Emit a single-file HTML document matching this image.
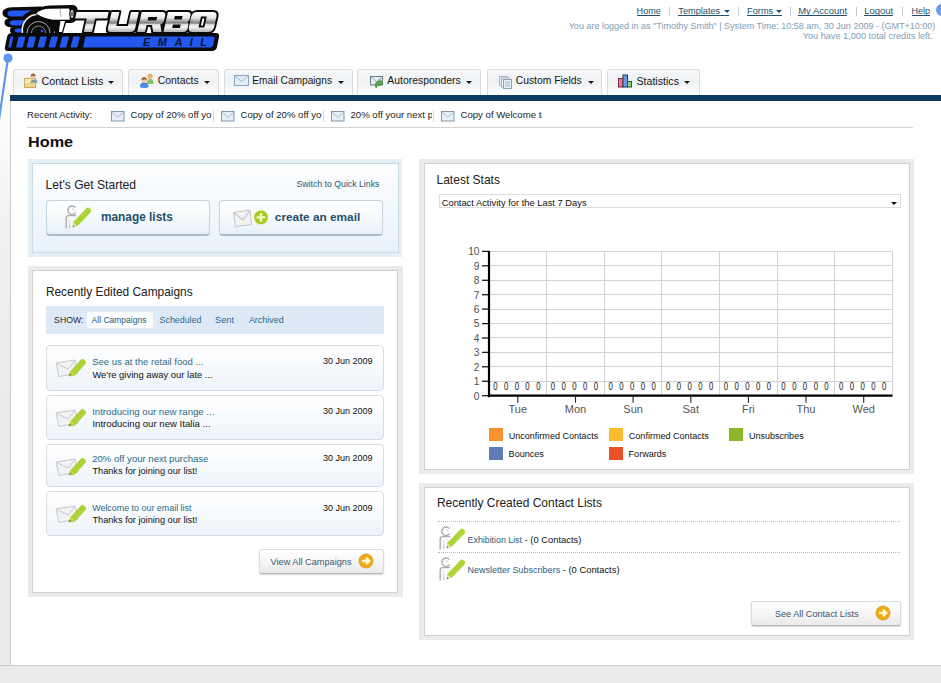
<!DOCTYPE html>
<html><head><meta charset="utf-8">
<style>
*{margin:0;padding:0;box-sizing:border-box}
html,body{width:941px;height:683px;overflow:hidden;background:#fff}
body{position:relative;font-family:"Liberation Sans",sans-serif;color:#222}
.a{position:absolute}
.t{position:absolute;white-space:nowrap;line-height:1}
.tab{position:absolute;top:69px;height:26px;border:1px solid #dddddd;border-bottom:none;border-radius:3px 3px 0 0;background:linear-gradient(#f6f7f8,#eff2f4 45%,#fcfdfd)}
.arr{position:absolute;width:0;height:0;border-left:3.5px solid transparent;border-right:3.5px solid transparent;border-top:3.5px solid #1a1a1a}
.panel{position:absolute;background:#ebebeb}
.pin{position:absolute;left:4px;top:4px;right:4px;bottom:4px;border:1px solid #d0d0d0;background:#fff}
.card{position:absolute;left:46px;width:338px;border:1px solid #d3dde6;border-radius:4px;background:linear-gradient(#ffffff,#eef4fa)}
.btn{position:absolute;border:1px solid #dcdcdc;border-bottom-color:#b8b8b8;border-radius:3px;background:linear-gradient(#ffffff,#f6f6f6 50%,#e9e9e9);box-shadow:0 1px 1.5px rgba(0,0,0,0.18)}
.bigbtn{position:absolute;top:200px;height:36px;border:1px solid #c5d3de;border-bottom:2px solid #a9bccb;border-radius:4px;background:linear-gradient(#ffffff 0%,#f7fafc 50%,#e6f0f8 100%)}
.dot{position:absolute;height:0;border-top:1px dotted #b9b9b9}
</style></head><body>
<div class="a" style="left:0;top:0;width:11px;height:683px;background:linear-gradient(#fff 0px,#fff 100px,#f8f8f8 160px,#f0f0f0 230px,#ebebeb 400px,#ebebeb 683px)"></div>
<div class="a" style="left:10px;top:95px;width:931px;height:571px;background:#fff;border-left:1px solid #cdcdcd"></div>
<div class="a" style="left:0;top:665px;width:941px;height:18px;background:#ebebeb;border-top:1px solid #cbcbcb"></div>
<svg class="a" style="left:0;top:0" width="232" height="56" viewBox="0 0 232 56">
<defs>
<linearGradient id="chrome" gradientUnits="userSpaceOnUse" x1="0" y1="12" x2="0" y2="32">
<stop offset="0" stop-color="#ffffff"/><stop offset="0.3" stop-color="#e6e6e6"/><stop offset="0.55" stop-color="#7c7c7c"/><stop offset="0.62" stop-color="#d8d8d8"/><stop offset="0.75" stop-color="#f6f6f6"/><stop offset="1" stop-color="#b0b0b0"/>
</linearGradient>
</defs>
<!-- flames -->
<path d="M2.5 13 C2.5 8.5 8 7.3 14 7.3 L42 6.5 L44 19 L14 18.8 C8 18.8 2.5 17.2 2.5 13 Z" fill="#0a0a0a"/>
<path d="M4.5 22.6 C4.5 18.6 9 17.6 14 17.6 L40 17 L40 27.8 L14 27.8 C9 27.8 4.5 26.6 4.5 22.6 Z" fill="#0a0a0a"/>
<path d="M10 30.6 C10 27.4 13 26.6 17 26.6 L34 26.5 L34 34.5 L17 34.5 C13 34.5 10 33.6 10 30.6 Z" fill="#0a0a0a"/>
<path d="M7.5 13.4 C7.5 11.4 10 10.6 13 10.6 L32 10.6 C27.5 12.3 24.5 14.4 22.5 16.6 L13 16.6 C10 16.6 7.5 15.4 7.5 13.4 Z" fill="#2358f0"/>
<path d="M9.6 23 C9.6 21.2 11.5 20.3 14 20.3 L27 20.3 C23.5 21.7 21.8 23.4 20.7 25.4 L14 25.4 C11.5 25.4 9.6 24.8 9.6 23 Z" fill="#2358f0"/>
<path d="M14.6 30.6 C14.6 29.3 16 28.6 18 28.6 L24 28.6 C23 29.8 22.4 31 22 32.5 L18 32.5 C16 32.5 14.6 31.9 14.6 30.6 Z" fill="#2358f0"/>
<!-- turbo wheel -->
<circle cx="38.5" cy="30" r="16" fill="#0a0a0a"/>
<path d="M22.5 33 A16 16 0 0 1 38 14.2" fill="none" stroke="#f2f2f2" stroke-width="1.5"/>
<path d="M27 33 A11.5 11.5 0 0 1 50 33" fill="none" stroke="#a8a8a8" stroke-width="1"/>
<path d="M31.5 33 A7 7 0 0 1 45.5 33" fill="none" stroke="#8c8c8c" stroke-width="1"/>
<circle cx="42" cy="31" r="1.3" fill="#2358f0"/>
<!-- pipe -->
<path d="M33 12 Q40 5.5 50 5.5 L73 5 Q78.5 5.5 78 13.5 Q77.5 22.5 71 23 L66 23 L63 33 L55 33 Q52 22 42 19 Z" fill="#0a0a0a"/>
<path d="M36 13.5 Q41 9 50 8.8 L69 8.6 Q71 13 69.5 19.5 L52 19.5 Q44 18.5 36 13.5 Z" fill="#ffffff"/>
<path d="M52 19.5 L69.5 19.5" stroke="#bbb" stroke-width="0.8"/>
<path d="M60.5 21 L65 21 L62 32 L59 32 Q59.5 26 60.5 21 Z" fill="#ffffff"/>
<path d="M60 9 L61 17" stroke="#9a9a9a" stroke-width="0.8"/>
<ellipse cx="72" cy="14" rx="2.8" ry="5.8" fill="#0a0a0a"/>
<ellipse cx="72" cy="14" rx="1.5" ry="4" fill="#e8e8e8"/>
<ellipse cx="72" cy="14" rx="0.6" ry="2.6" fill="#0a0a0a"/>
<!-- bar backdrop -->
<path d="M12 33 L216 33 Q219.5 33 219 37 L217 47 Q216 51 212 51 L8 51 Q4 51 5 47 L7 37 Q8 33 12 33 Z" fill="#0a0a0a"/>
<g fill="#2358f0">
<path d="M10.5 36.5 L13.5 36.5 L11.2 47.5 L8.2 47.5 Z"/>
<path d="M19.5 36.5 L25.0 36.5 Q25.5 36.5 25.3 37.5 L23.0 46.5 Q22.7 47.5 22.0 47.5 L16.5 47.5 Q16.0 47.5 16.2 46.5 L18.5 37.5 Q18.8 36.5 19.5 36.5 Z"/>
<path d="M30 36.5 L35.5 36.5 Q36 36.5 35.8 37.5 L33.5 46.5 Q33.2 47.5 32.5 47.5 L27 47.5 Q26.5 47.5 26.7 46.5 L29 37.5 Q29.3 36.5 30 36.5 Z"/>
<path d="M41 36.5 L46.5 36.5 Q47 36.5 46.8 37.5 L44.5 46.5 Q44.2 47.5 43.5 47.5 L38 47.5 Q37.5 47.5 37.7 46.5 L40 37.5 Q40.3 36.5 41 36.5 Z"/>
<path d="M52 36.5 L57.5 36.5 Q58 36.5 57.8 37.5 L55.5 46.5 Q55.2 47.5 54.5 47.5 L49 47.5 Q48.5 47.5 48.7 46.5 L51 37.5 Q51.3 36.5 52 36.5 Z"/>
<path d="M63 36.5 L68.5 36.5 Q69 36.5 68.8 37.5 L66.5 46.5 Q66.2 47.5 65.5 47.5 L60 47.5 Q59.5 47.5 59.7 46.5 L62 37.5 Q62.3 36.5 63 36.5 Z"/>
<path d="M74 36.5 L79.5 36.5 Q80 36.5 79.8 37.5 L77.5 46.5 Q77.2 47.5 76.5 47.5 L71 47.5 Q70.5 47.5 70.7 46.5 L73 37.5 Q73.3 36.5 74 36.5 Z"/>
<path d="M85.5 36.5 L212.5 36.5 Q215 36.5 214.5 38.5 L213 45.5 Q212.5 47.5 210 47.5 L83 47.5 Z"/>
</g>
<!-- TURBO letters -->
<g transform="translate(76,0) scale(0.972,1) translate(-76,0) translate(0,32) skewX(-13) translate(0,-32)">
<path fill="url(#chrome)" stroke="#0a0a0a" stroke-width="4" stroke-linejoin="round" paint-order="stroke" fill-rule="evenodd" d="
M72 12 L105 12 L105 18.5 L92.5 18.5 L92.5 32 L84 32 L84 18.5 L72 18.5 Z
M108 12 L116 12 L116 26 L128 26 L128 12 L136 12 L136 28 Q136 32 132 32 L112 32 Q108 32 108 28 Z
M139 12 L160 12 Q164 12 164 16 L164 21 Q164 24 161 24.5 L164 32 L155.5 32 L152.5 25 L147 25 L147 32 L139 32 Z M147 17 L147 20.5 L156 20.5 L156 17 Z
M166 12 L186 12 Q190 12 190 15.5 L190 19 Q190 21.5 188 22 Q190 22.5 190 25 L190 28.5 Q190 32 186 32 L166 32 Z M174 16 L174 19.5 L182 19.5 L182 16 Z M174 24.5 L174 28 L182 28 L182 24.5 Z
M196 12 L212 12 Q217 12 217 17 L217 27 Q217 32 212 32 L196 32 Q191 32 191 27 L191 17 Q191 12 196 12 Z M201 16.5 L201 27.5 L207 27.5 L207 16.5 Z
"/>
</g>
<!-- EMAIL -->
<text x="143" y="46.3" font-family="Liberation Sans" font-weight="bold" font-style="italic" font-size="11" textLength="64" lengthAdjust="spacing" fill="#0a1430">EMAIL</text>
</svg>
<svg class="a" style="left:0;top:48px" width="20" height="80"><line x1="8" y1="10" x2="-1.5" y2="75" stroke="#5f98ea" stroke-width="2.2"/><circle cx="8" cy="10" r="4.6" fill="#5f98ea"/></svg>
<span class="t" style="left:636.5999999999999px;top:7.31px;font-size:9.09px;color:#22506c;">Home</span>
<div class="a" style="left:636.5999999999999px;top:15px;width:23.5px;height:1px;background:#22506c"></div>
<div class="a" style="left:669px;top:7px;width:1px;height:9px;background:#c3ccd4"></div>
<span class="t" style="left:678.3px;top:7.21px;font-size:9.2px;color:#22506c;">Templates</span>
<div class="a" style="left:678.3px;top:15px;width:51px;height:1px;background:#22506c"></div>
<div class="arr" style="left:724px;top:10.2px;border-top-color:#22506c;border-left-width:3px;border-right-width:3px;border-top-width:3.6px"></div>
<div class="a" style="left:738px;top:7px;width:1px;height:9px;background:#c3ccd4"></div>
<span class="t" style="left:747.0999999999999px;top:7.21px;font-size:9.2px;color:#22506c;">Forms</span>
<div class="a" style="left:747.0999999999999px;top:15px;width:35px;height:1px;background:#22506c"></div>
<div class="arr" style="left:776px;top:10.2px;border-top-color:#22506c;border-left-width:3px;border-right-width:3px;border-top-width:3.6px"></div>
<div class="a" style="left:790px;top:7px;width:1px;height:9px;background:#c3ccd4"></div>
<span class="t" style="left:798.24px;top:6.40px;font-size:9.45px;color:#22506c;">My Account</span>
<div class="a" style="left:798.24px;top:15px;width:48.5px;height:1px;background:#22506c"></div>
<div class="a" style="left:856px;top:7px;width:1px;height:9px;background:#c3ccd4"></div>
<span class="t" style="left:864.25px;top:6.42px;font-size:9.43px;color:#22506c;">Logout</span>
<div class="a" style="left:864.25px;top:15px;width:28.5px;height:1px;background:#22506c"></div>
<div class="a" style="left:902px;top:7px;width:1px;height:9px;background:#c3ccd4"></div>
<span class="t" style="left:911.5799999999999px;top:7.36px;font-size:9.02px;color:#22506c;">Help</span>
<div class="a" style="left:911.5799999999999px;top:15px;width:18px;height:1px;background:#22506c"></div>
<div class="a" style="left:935.5px;top:4px;width:12px;height:12px;border-radius:6px;background:#6a9fea"></div>
<span class="t" style="left:568.7px;top:22.36px;font-size:9.02px;color:#7f9db6;">You are logged in as "Timothy Smith" | System Time: 10:58 am, 30 Jun 2009 - (GMT+10:00)</span>
<span class="t" style="left:802.7px;top:32.24px;font-size:9.17px;color:#7f9db6;">You have 1,000 total credits left.</span>
<div class="tab" style="left:13px;width:110px"></div>
<div class="tab" style="left:128px;width:91px"></div>
<div class="tab" style="left:224px;width:129px"></div>
<div class="tab" style="left:357px;width:124px"></div>
<div class="tab" style="left:487px;width:115px"></div>
<div class="tab" style="left:607px;width:93px"></div>
<span class="t" style="left:41.5px;top:75.95px;font-size:10.69px;color:#161616;">Contact Lists</span>
<div class="arr" style="left:108.4px;top:81px"></div>
<span class="t" style="left:157.8px;top:76.23px;font-size:10.36px;color:#161616;">Contacts</span>
<div class="arr" style="left:204px;top:81px"></div>
<span class="t" style="left:252.3px;top:76.38px;font-size:10.18px;color:#161616;">Email Campaigns</span>
<div class="arr" style="left:337.5px;top:81px"></div>
<span class="t" style="left:387.3px;top:76.19px;font-size:10.41px;color:#161616;">Autoresponders</span>
<div class="arr" style="left:466px;top:81px"></div>
<span class="t" style="left:515.7px;top:76.24px;font-size:10.35px;color:#161616;">Custom Fields</span>
<div class="arr" style="left:587.5px;top:81px"></div>
<span class="t" style="left:636.5px;top:76.02px;font-size:10.61px;color:#161616;">Statistics</span>
<div class="arr" style="left:684px;top:81px"></div>
<svg class="a" style="left:22px;top:72px" width="18" height="18" viewBox="0 0 18 18">
<rect x="2.5" y="6.5" width="11" height="9" fill="#f8eaa8" stroke="#c8aa68" stroke-width="1"/>
<rect x="3" y="11" width="10" height="4" fill="#eed486"/>
<path d="M8 11 L10 7.5 L14 7.5 L16 10.5 Z" fill="#8a9aa0"/>
<circle cx="11" cy="5" r="2.6" fill="#e8c8a8"/>
<path d="M8.5 4.5 Q9 1.5 11 1.6 Q13.5 1.6 13.6 4.5 Q12 3 8.5 4.5 Z" fill="#9a5a2a"/>
</svg>
<svg class="a" style="left:138px;top:72px" width="18" height="18" viewBox="0 0 18 18">
<path d="M9 11 Q9 7 12 7 Q15.5 7 15.5 11 L15.5 12 L9 12 Z" fill="#8bbf6a"/>
<circle cx="12" cy="4.2" r="2.6" fill="#e9b46a"/>
<path d="M2 15 Q2 10.5 6 10.5 Q10.5 10.5 10.5 15 Z" fill="#3f7fd0"/>
<ellipse cx="6.2" cy="14" rx="4.3" ry="2" fill="#4d8fe0"/>
<circle cx="6.2" cy="8.2" r="2.6" fill="#f0c8a0"/>
<path d="M3.6 8 Q3.6 5.2 6.2 5.3 Q8.8 5.2 8.8 8 Q7 6.5 3.6 8 Z" fill="#8a4f2a"/>
</svg>
<svg class="a" style="left:234px;top:75px" width="16" height="12" viewBox="0 0 16 12">
<rect x="0.5" y="0.5" width="14" height="10" fill="#e4eef8" stroke="#8aa4c0" stroke-width="1"/>
<path d="M1 1 L7.5 6.5 L14 1" fill="none" stroke="#9cb4cc" stroke-width="1"/>
</svg>
<svg class="a" style="left:369px;top:75px" width="16" height="15" viewBox="0 0 16 15">
<rect x="1.5" y="1.5" width="12" height="8.5" fill="#e6eef6" stroke="#6c7c8c" stroke-width="1"/>
<path d="M2 2 L7.5 6.5 L13 2" fill="none" stroke="#9ab" stroke-width="1"/>
<path d="M6 9 Q8 5.5 11 6 L11 4.5 L14 8 L11 11 L11 9.5 Q9 9 7 13 Z" fill="#5aa848" stroke="#3a7a30" stroke-width="0.6"/>
</svg>
<svg class="a" style="left:498px;top:75px" width="16" height="15" viewBox="0 0 16 15">
<rect x="1.5" y="1.5" width="8" height="9" fill="#eef3f9" stroke="#a8b8c8" stroke-width="1"/>
<rect x="3.5" y="3" width="8" height="9" fill="#eef3f9" stroke="#a0b2c4" stroke-width="1"/>
<rect x="5.5" y="4.5" width="8" height="9" fill="#e8eef8" stroke="#8ea4bc" stroke-width="1"/>
<path d="M7 7 L12 7 M7 9 L12 9 M7 11 L12 11" stroke="#98acc0" stroke-width="0.8"/>
</svg>
<svg class="a" style="left:617px;top:74px" width="16" height="14" viewBox="0 0 16 14">
<rect x="1.5" y="4.5" width="4.5" height="8.5" fill="#f07a8a" stroke="#7a2a3a" stroke-width="1"/>
<rect x="6" y="1" width="4.5" height="12" fill="#6c9ae6" stroke="#1f3a6a" stroke-width="1"/>
<rect x="10.5" y="7.5" width="4" height="5.5" fill="#8acc8a" stroke="#2a5a2a" stroke-width="1"/>
</svg>
<div class="a" style="left:10px;top:95px;width:931px;height:6px;background:#0c3a62"></div>
<span class="t" style="left:27.0px;top:110.22px;font-size:9.55px;color:#222;">Recent Activity:</span>
<svg class="a" style="left:111px;top:110.5px" width="14" height="11" viewBox="0 0 14 11"><rect x="0.5" y="0.5" width="12.5" height="9.5" fill="#e6eff8" stroke="#7f98b0" stroke-width="1"/><path d="M1 1.5 L6.75 6 L12.5 1.5" fill="none" stroke="#9fb8d0" stroke-width="0.9"/></svg>
<div class="a" style="left:130.5px;top:108px;width:81px;height:14px;overflow:hidden"><span class="t" style="left:0px;top:2.17px;font-size:9.6px;color:#222;">Copy of 20% off your next purchase</span>
</div>
<div class="a" style="left:213px;top:110px;width:1px;height:12px;background:#d9d9d9"></div>
<svg class="a" style="left:221px;top:110.5px" width="14" height="11" viewBox="0 0 14 11"><rect x="0.5" y="0.5" width="12.5" height="9.5" fill="#e6eff8" stroke="#7f98b0" stroke-width="1"/><path d="M1 1.5 L6.75 6 L12.5 1.5" fill="none" stroke="#9fb8d0" stroke-width="0.9"/></svg>
<div class="a" style="left:240.5px;top:108px;width:81px;height:14px;overflow:hidden"><span class="t" style="left:0px;top:2.17px;font-size:9.6px;color:#222;">Copy of 20% off your next purchase</span>
</div>
<div class="a" style="left:323px;top:110px;width:1px;height:12px;background:#d9d9d9"></div>
<svg class="a" style="left:331px;top:110.5px" width="14" height="11" viewBox="0 0 14 11"><rect x="0.5" y="0.5" width="12.5" height="9.5" fill="#e6eff8" stroke="#7f98b0" stroke-width="1"/><path d="M1 1.5 L6.75 6 L12.5 1.5" fill="none" stroke="#9fb8d0" stroke-width="0.9"/></svg>
<div class="a" style="left:350.5px;top:108px;width:81px;height:14px;overflow:hidden"><span class="t" style="left:0px;top:2.17px;font-size:9.6px;color:#222;">20% off your next purchase</span>
</div>
<div class="a" style="left:433px;top:110px;width:1px;height:12px;background:#d9d9d9"></div>
<svg class="a" style="left:441px;top:110.5px" width="14" height="11" viewBox="0 0 14 11"><rect x="0.5" y="0.5" width="12.5" height="9.5" fill="#e6eff8" stroke="#7f98b0" stroke-width="1"/><path d="M1 1.5 L6.75 6 L12.5 1.5" fill="none" stroke="#9fb8d0" stroke-width="0.9"/></svg>
<div class="a" style="left:460.5px;top:108px;width:81px;height:14px;overflow:hidden"><span class="t" style="left:0px;top:2.17px;font-size:9.6px;color:#222;">Copy of Welcome to our email list</span>
</div>
<div class="a" style="left:27px;top:127px;width:886px;height:1px;background:#d2d2d2"></div>
<span class="t" style="left:28.0px;top:135.15px;font-size:14px;color:#111;font-weight:bold;transform:scaleX(1.16);transform-origin:0 0;">Home</span>
<div class="a" style="left:28px;top:159px;width:374px;height:98px;background:#e5eef2"></div>
<div class="a" style="left:32px;top:163px;width:367px;height:90px;border:1px solid #c8dce6;background:linear-gradient(#fdfeff 0%,#f5f9fc 40%,#e8f1fa 100%)"></div>
<span class="t" style="left:45.6px;top:178.75px;font-size:12.11px;color:#202020;">Let's Get Started</span>
<span class="t" style="left:296.5px;top:180.41px;font-size:8.73px;color:#2b5674;">Switch to Quick Links</span>
<div class="bigbtn" style="left:46px;width:164px"></div>
<div class="bigbtn" style="left:219px;width:164px"></div>
<span class="t" style="left:100.9px;top:211.74px;font-size:11.88px;color:#1f4f6e;font-weight:bold;">manage lists</span>
<span class="t" style="left:274.8px;top:211.79px;font-size:11.83px;color:#1f4f6e;font-weight:bold;">create an email</span>
<svg class="a" style="left:65px;top:205px" width="27" height="24" viewBox="0 0 27 24">
<path d="M10.3 2.6 A4.2 4.2 0 1 0 10.5 7.6" fill="none" stroke="#ababab" stroke-width="1.4"/>
<path d="M7 3.6 L9.6 5.2" stroke="#bdbdbd" stroke-width="0.9"/>
<path d="M1.2 23.5 L1.2 13.2 Q1.2 10.6 3.8 10.6 L11.5 10.6" fill="none" stroke="#ababab" stroke-width="1.4"/>
<path d="M4.6 14.5 L4.6 23.5" stroke="#c4c4c4" stroke-width="1.1"/>
<path d="M2 11.5 L11 11.5 L8.5 20 L2 20 Z" fill="#f4f4f4" opacity="0.6"/>
<path d="M8 17.2 L21.2 3.4 Q23 1.8 24.8 3.4 L25.6 4.2 Q27 5.8 25.5 7.4 L12.2 21.2 Z" fill="#acd433"/>
<path d="M8 17.2 L12.2 21.2 L7.6 22.2 Z" fill="#d8e8a0"/>
<path d="M7.6 22.2 L8.4 20.3 L9.6 21.5 Z" fill="#555"/>
</svg>
<svg class="a" style="left:232px;top:206px" width="40" height="24" viewBox="0 0 40 24">
<path d="M1.5 6.5 L18 4 L19.5 18.5 L3.5 20.5 Z" fill="#f2f2f2" stroke="#c6c6c6" stroke-width="1"/>
<path d="M2 7 L11 14 L18 4.5" fill="none" stroke="#c4c4c4" stroke-width="1.2"/>
<circle cx="29" cy="11.4" r="7.6" fill="#e4f2a0" opacity="0.6"/>
<circle cx="29" cy="11.4" r="6.8" fill="#a6ca22"/>
<path d="M29 7 L29 15.8 M24.6 11.4 L33.4 11.4" stroke="#f2f9c8" stroke-width="2.4"/>
</svg>
<div class="panel" style="left:28px;top:266px;width:375px;height:331px"><div class="pin" style="right:5px"></div></div>
<span class="t" style="left:45.9px;top:286.93px;font-size:11.9px;color:#202020;">Recently Edited Campaigns</span>
<div class="a" style="left:46px;top:306px;width:338px;height:28px;background:#dde9f6"></div>
<div class="a" style="left:87px;top:311.5px;width:66px;height:16.5px;background:#fbfcfe;border-radius:2px"></div>
<span class="t" style="left:54.1px;top:316.24px;font-size:8.7px;color:#2a2a2a;">SHOW:</span>
<span class="t" style="left:91.6px;top:316.40px;font-size:8.5px;color:#2c5a7a;">All Campaigns</span>
<span class="t" style="left:159.6px;top:316.11px;font-size:8.85px;color:#2c6a8a;">Scheduled</span>
<span class="t" style="left:215px;top:315.77px;font-size:9.25px;color:#2c6a8a;">Sent</span>
<span class="t" style="left:248.9px;top:316.00px;font-size:8.98px;color:#2c6a8a;">Archived</span>
<div class="card" style="top:345px;height:46px"></div>
<svg class="a" style="left:55px;top:357px" width="32" height="22" viewBox="0 0 32 22">
<path d="M1 6 L20 3 L23 16 L4 19.5 Z" fill="#f3f3f3" stroke="#c8c8c8" stroke-width="1"/>
<path d="M1.5 6.5 L13 12 L20 3.5" fill="none" stroke="#c8c8c8" stroke-width="1"/>
<path d="M14 19 L15.5 14.5 L26 3 Q27.5 1.5 29 3 L30 4 Q31.5 5.5 30 7 L19.5 18.5 Z" fill="#acd433" stroke="#9cc52a" stroke-width="0.6"/>
<path d="M15.5 14.5 L19.5 18.5" stroke="#c8e678" stroke-width="1"/>
<path d="M14 19 L15 17 L16 18 Z" fill="#555"/>
</svg>
<span class="t" style="left:92.2px;top:356.92px;font-size:9.54px;color:#2c6c86;">See us at the retail food ...</span>
<span class="t" style="left:92.4px;top:370.03px;font-size:9.42px;color:#111;">We're giving away our late ...</span>
<span class="t" style="left:323px;top:357.36px;font-size:9.02px;color:#111;">30 Jun 2009</span>
<div class="card" style="top:395px;height:45px"></div>
<svg class="a" style="left:55px;top:407px" width="32" height="22" viewBox="0 0 32 22">
<path d="M1 6 L20 3 L23 16 L4 19.5 Z" fill="#f3f3f3" stroke="#c8c8c8" stroke-width="1"/>
<path d="M1.5 6.5 L13 12 L20 3.5" fill="none" stroke="#c8c8c8" stroke-width="1"/>
<path d="M14 19 L15.5 14.5 L26 3 Q27.5 1.5 29 3 L30 4 Q31.5 5.5 30 7 L19.5 18.5 Z" fill="#acd433" stroke="#9cc52a" stroke-width="0.6"/>
<path d="M15.5 14.5 L19.5 18.5" stroke="#c8e678" stroke-width="1"/>
<path d="M14 19 L15 17 L16 18 Z" fill="#555"/>
</svg>
<span class="t" style="left:92.2px;top:406.87px;font-size:9.6px;color:#2c6c86;">Introducing our new range ...</span>
<span class="t" style="left:92.4px;top:418.84px;font-size:9.64px;color:#111;">Introducing our new Italia ...</span>
<span class="t" style="left:323px;top:407.36px;font-size:9.02px;color:#111;">30 Jun 2009</span>
<div class="card" style="top:444px;height:43px"></div>
<svg class="a" style="left:55px;top:456px" width="32" height="22" viewBox="0 0 32 22">
<path d="M1 6 L20 3 L23 16 L4 19.5 Z" fill="#f3f3f3" stroke="#c8c8c8" stroke-width="1"/>
<path d="M1.5 6.5 L13 12 L20 3.5" fill="none" stroke="#c8c8c8" stroke-width="1"/>
<path d="M14 19 L15.5 14.5 L26 3 Q27.5 1.5 29 3 L30 4 Q31.5 5.5 30 7 L19.5 18.5 Z" fill="#acd433" stroke="#9cc52a" stroke-width="0.6"/>
<path d="M15.5 14.5 L19.5 18.5" stroke="#c8e678" stroke-width="1"/>
<path d="M14 19 L15 17 L16 18 Z" fill="#555"/>
</svg>
<span class="t" style="left:92.2px;top:453.90px;font-size:9.57px;color:#2c6c86;">20% off your next purchase</span>
<span class="t" style="left:92.4px;top:467.20px;font-size:9.21px;color:#111;">Thanks for joining our list!</span>
<span class="t" style="left:323px;top:454.36px;font-size:9.02px;color:#111;">30 Jun 2009</span>
<div class="card" style="top:491px;height:45px"></div>
<svg class="a" style="left:55px;top:503px" width="32" height="22" viewBox="0 0 32 22">
<path d="M1 6 L20 3 L23 16 L4 19.5 Z" fill="#f3f3f3" stroke="#c8c8c8" stroke-width="1"/>
<path d="M1.5 6.5 L13 12 L20 3.5" fill="none" stroke="#c8c8c8" stroke-width="1"/>
<path d="M14 19 L15.5 14.5 L26 3 Q27.5 1.5 29 3 L30 4 Q31.5 5.5 30 7 L19.5 18.5 Z" fill="#acd433" stroke="#9cc52a" stroke-width="0.6"/>
<path d="M15.5 14.5 L19.5 18.5" stroke="#c8e678" stroke-width="1"/>
<path d="M14 19 L15 17 L16 18 Z" fill="#555"/>
</svg>
<span class="t" style="left:92.2px;top:504.45px;font-size:8.92px;color:#2c6c86;">Welcome to our email list</span>
<span class="t" style="left:92.4px;top:516.20px;font-size:9.21px;color:#111;">Thanks for joining our list!</span>
<span class="t" style="left:323px;top:504.36px;font-size:9.02px;color:#111;">30 Jun 2009</span>
<div class="btn" style="left:258.5px;top:548.5px;width:125px;height:25.5px"></div>
<span class="t" style="left:270.6px;top:558.23px;font-size:9.18px;color:#3b5872;">View All Campaigns</span>
<svg class="a" style="left:358px;top:553px" width="16" height="16" viewBox="0 0 16 16"><circle cx="8" cy="8" r="7" fill="#eeaa18" stroke="#dc9410" stroke-width="0.8"/><path d="M4 8 L11 8 M8 4.8 L11.3 8 L8 11.2" fill="none" stroke="#fff8cc" stroke-width="2.4" stroke-linejoin="miter"/></svg>
<div class="panel" style="left:419px;top:159px;width:495px;height:315px"><div class="pin" style="left:5px"></div></div>
<span class="t" style="left:436.5px;top:173.83px;font-size:12.02px;color:#202020;">Latest Stats</span>
<div class="a" style="left:439px;top:194px;width:462px;height:14px;border:1px solid #dcdcdc;background:#fff"></div>
<span class="t" style="left:441.7px;top:198.58px;font-size:9.36px;color:#111;">Contact Activity for the Last 7 Days</span>
<div class="arr" style="left:890.8px;top:202px;border-left-width:3.3px;border-right-width:3.3px;border-top-width:3.8px;border-top-color:#111"></div>
<svg class="a" style="left:0;top:0" width="941" height="683" viewBox="0 0 941 683">
<line x1="489" y1="381.5" x2="892.5" y2="381.5" stroke="#d2d2d2" stroke-width="1"/>
<line x1="489" y1="366.5" x2="892.5" y2="366.5" stroke="#d2d2d2" stroke-width="1"/>
<line x1="489" y1="352.5" x2="892.5" y2="352.5" stroke="#d2d2d2" stroke-width="1"/>
<line x1="489" y1="337.5" x2="892.5" y2="337.5" stroke="#d2d2d2" stroke-width="1"/>
<line x1="489" y1="323.5" x2="892.5" y2="323.5" stroke="#d2d2d2" stroke-width="1"/>
<line x1="489" y1="309.5" x2="892.5" y2="309.5" stroke="#d2d2d2" stroke-width="1"/>
<line x1="489" y1="294.5" x2="892.5" y2="294.5" stroke="#d2d2d2" stroke-width="1"/>
<line x1="489" y1="280.5" x2="892.5" y2="280.5" stroke="#d2d2d2" stroke-width="1"/>
<line x1="489" y1="265.5" x2="892.5" y2="265.5" stroke="#d2d2d2" stroke-width="1"/>
<line x1="489" y1="251.5" x2="892.5" y2="251.5" stroke="#d2d2d2" stroke-width="1"/>
<line x1="546.5" y1="251.4" x2="546.5" y2="395.7" stroke="#d2d2d2" stroke-width="1"/>
<line x1="604.5" y1="251.4" x2="604.5" y2="395.7" stroke="#d2d2d2" stroke-width="1"/>
<line x1="661.5" y1="251.4" x2="661.5" y2="395.7" stroke="#d2d2d2" stroke-width="1"/>
<line x1="719.5" y1="251.4" x2="719.5" y2="395.7" stroke="#d2d2d2" stroke-width="1"/>
<line x1="777.5" y1="251.4" x2="777.5" y2="395.7" stroke="#d2d2d2" stroke-width="1"/>
<line x1="834.5" y1="251.4" x2="834.5" y2="395.7" stroke="#d2d2d2" stroke-width="1"/>
<line x1="892.5" y1="251.4" x2="892.5" y2="395.7" stroke="#d2d2d2" stroke-width="1"/>
<line x1="482" y1="395.7" x2="489" y2="395.7" stroke="#1a1a1a" stroke-width="1.3"/>
<text x="479.5" y="399.5" text-anchor="end" font-family="Liberation Sans" font-size="10.2" fill="#505050">0</text>
<line x1="482" y1="381.3" x2="489" y2="381.3" stroke="#1a1a1a" stroke-width="1.3"/>
<text x="479.5" y="385.1" text-anchor="end" font-family="Liberation Sans" font-size="10.2" fill="#505050">1</text>
<line x1="482" y1="366.8" x2="489" y2="366.8" stroke="#1a1a1a" stroke-width="1.3"/>
<text x="479.5" y="370.6" text-anchor="end" font-family="Liberation Sans" font-size="10.2" fill="#505050">2</text>
<line x1="482" y1="352.4" x2="489" y2="352.4" stroke="#1a1a1a" stroke-width="1.3"/>
<text x="479.5" y="356.2" text-anchor="end" font-family="Liberation Sans" font-size="10.2" fill="#505050">3</text>
<line x1="482" y1="338.0" x2="489" y2="338.0" stroke="#1a1a1a" stroke-width="1.3"/>
<text x="479.5" y="341.8" text-anchor="end" font-family="Liberation Sans" font-size="10.2" fill="#505050">4</text>
<line x1="482" y1="323.6" x2="489" y2="323.6" stroke="#1a1a1a" stroke-width="1.3"/>
<text x="479.5" y="327.4" text-anchor="end" font-family="Liberation Sans" font-size="10.2" fill="#505050">5</text>
<line x1="482" y1="309.1" x2="489" y2="309.1" stroke="#1a1a1a" stroke-width="1.3"/>
<text x="479.5" y="312.9" text-anchor="end" font-family="Liberation Sans" font-size="10.2" fill="#505050">6</text>
<line x1="482" y1="294.7" x2="489" y2="294.7" stroke="#1a1a1a" stroke-width="1.3"/>
<text x="479.5" y="298.5" text-anchor="end" font-family="Liberation Sans" font-size="10.2" fill="#505050">7</text>
<line x1="482" y1="280.3" x2="489" y2="280.3" stroke="#1a1a1a" stroke-width="1.3"/>
<text x="479.5" y="284.1" text-anchor="end" font-family="Liberation Sans" font-size="10.2" fill="#505050">8</text>
<line x1="482" y1="265.8" x2="489" y2="265.8" stroke="#1a1a1a" stroke-width="1.3"/>
<text x="479.5" y="269.6" text-anchor="end" font-family="Liberation Sans" font-size="10.2" fill="#505050">9</text>
<line x1="482" y1="251.4" x2="489" y2="251.4" stroke="#1a1a1a" stroke-width="1.3"/>
<text x="479.5" y="255.2" text-anchor="end" font-family="Liberation Sans" font-size="10.2" fill="#505050">10</text>
<line x1="489" y1="250.9" x2="489" y2="397.2" stroke="#000" stroke-width="2.2"/>
<line x1="488" y1="395.7" x2="892.5" y2="395.7" stroke="#000" stroke-width="2.3"/>
<line x1="517.8" y1="395.7" x2="517.8" y2="402.7" stroke="#222" stroke-width="1.1"/>
<text x="517.8" y="412.8" text-anchor="middle" font-family="Liberation Sans" font-size="11" fill="#555555">Tue</text>
<text transform="translate(495.3,390) scale(0.78,1)" text-anchor="middle" font-family="Liberation Sans" font-size="10" fill="#111">0</text>
<text transform="translate(506.1,390) scale(0.78,1)" text-anchor="middle" font-family="Liberation Sans" font-size="10" fill="#111">0</text>
<text transform="translate(516.8,390) scale(0.78,1)" text-anchor="middle" font-family="Liberation Sans" font-size="10" fill="#111">0</text>
<text transform="translate(527.5,390) scale(0.78,1)" text-anchor="middle" font-family="Liberation Sans" font-size="10" fill="#111">0</text>
<text transform="translate(538.3,390) scale(0.78,1)" text-anchor="middle" font-family="Liberation Sans" font-size="10" fill="#111">0</text>
<line x1="575.5" y1="395.7" x2="575.5" y2="402.7" stroke="#222" stroke-width="1.1"/>
<text x="575.5" y="412.8" text-anchor="middle" font-family="Liberation Sans" font-size="11" fill="#555555">Mon</text>
<text transform="translate(552.9,390) scale(0.78,1)" text-anchor="middle" font-family="Liberation Sans" font-size="10" fill="#111">0</text>
<text transform="translate(563.7,390) scale(0.78,1)" text-anchor="middle" font-family="Liberation Sans" font-size="10" fill="#111">0</text>
<text transform="translate(574.4,390) scale(0.78,1)" text-anchor="middle" font-family="Liberation Sans" font-size="10" fill="#111">0</text>
<text transform="translate(585.2,390) scale(0.78,1)" text-anchor="middle" font-family="Liberation Sans" font-size="10" fill="#111">0</text>
<text transform="translate(595.9,390) scale(0.78,1)" text-anchor="middle" font-family="Liberation Sans" font-size="10" fill="#111">0</text>
<line x1="633.1" y1="395.7" x2="633.1" y2="402.7" stroke="#222" stroke-width="1.1"/>
<text x="633.1" y="412.8" text-anchor="middle" font-family="Liberation Sans" font-size="11" fill="#555555">Sun</text>
<text transform="translate(610.6,390) scale(0.78,1)" text-anchor="middle" font-family="Liberation Sans" font-size="10" fill="#111">0</text>
<text transform="translate(621.3,390) scale(0.78,1)" text-anchor="middle" font-family="Liberation Sans" font-size="10" fill="#111">0</text>
<text transform="translate(632.1,390) scale(0.78,1)" text-anchor="middle" font-family="Liberation Sans" font-size="10" fill="#111">0</text>
<text transform="translate(642.8,390) scale(0.78,1)" text-anchor="middle" font-family="Liberation Sans" font-size="10" fill="#111">0</text>
<text transform="translate(653.6,390) scale(0.78,1)" text-anchor="middle" font-family="Liberation Sans" font-size="10" fill="#111">0</text>
<line x1="690.8" y1="395.7" x2="690.8" y2="402.7" stroke="#222" stroke-width="1.1"/>
<text x="690.8" y="412.8" text-anchor="middle" font-family="Liberation Sans" font-size="11" fill="#555555">Sat</text>
<text transform="translate(668.2,390) scale(0.78,1)" text-anchor="middle" font-family="Liberation Sans" font-size="10" fill="#111">0</text>
<text transform="translate(679.0,390) scale(0.78,1)" text-anchor="middle" font-family="Liberation Sans" font-size="10" fill="#111">0</text>
<text transform="translate(689.7,390) scale(0.78,1)" text-anchor="middle" font-family="Liberation Sans" font-size="10" fill="#111">0</text>
<text transform="translate(700.5,390) scale(0.78,1)" text-anchor="middle" font-family="Liberation Sans" font-size="10" fill="#111">0</text>
<text transform="translate(711.2,390) scale(0.78,1)" text-anchor="middle" font-family="Liberation Sans" font-size="10" fill="#111">0</text>
<line x1="748.4" y1="395.7" x2="748.4" y2="402.7" stroke="#222" stroke-width="1.1"/>
<text x="748.4" y="412.8" text-anchor="middle" font-family="Liberation Sans" font-size="11" fill="#555555">Fri</text>
<text transform="translate(725.9,390) scale(0.78,1)" text-anchor="middle" font-family="Liberation Sans" font-size="10" fill="#111">0</text>
<text transform="translate(736.6,390) scale(0.78,1)" text-anchor="middle" font-family="Liberation Sans" font-size="10" fill="#111">0</text>
<text transform="translate(747.4,390) scale(0.78,1)" text-anchor="middle" font-family="Liberation Sans" font-size="10" fill="#111">0</text>
<text transform="translate(758.1,390) scale(0.78,1)" text-anchor="middle" font-family="Liberation Sans" font-size="10" fill="#111">0</text>
<text transform="translate(768.9,390) scale(0.78,1)" text-anchor="middle" font-family="Liberation Sans" font-size="10" fill="#111">0</text>
<line x1="806.0" y1="395.7" x2="806.0" y2="402.7" stroke="#222" stroke-width="1.1"/>
<text x="806.0" y="412.8" text-anchor="middle" font-family="Liberation Sans" font-size="11" fill="#555555">Thu</text>
<text transform="translate(783.5,390) scale(0.78,1)" text-anchor="middle" font-family="Liberation Sans" font-size="10" fill="#111">0</text>
<text transform="translate(794.3,390) scale(0.78,1)" text-anchor="middle" font-family="Liberation Sans" font-size="10" fill="#111">0</text>
<text transform="translate(805.0,390) scale(0.78,1)" text-anchor="middle" font-family="Liberation Sans" font-size="10" fill="#111">0</text>
<text transform="translate(815.8,390) scale(0.78,1)" text-anchor="middle" font-family="Liberation Sans" font-size="10" fill="#111">0</text>
<text transform="translate(826.5,390) scale(0.78,1)" text-anchor="middle" font-family="Liberation Sans" font-size="10" fill="#111">0</text>
<line x1="863.7" y1="395.7" x2="863.7" y2="402.7" stroke="#222" stroke-width="1.1"/>
<text x="863.7" y="412.8" text-anchor="middle" font-family="Liberation Sans" font-size="11" fill="#555555">Wed</text>
<text transform="translate(841.2,390) scale(0.78,1)" text-anchor="middle" font-family="Liberation Sans" font-size="10" fill="#111">0</text>
<text transform="translate(851.9,390) scale(0.78,1)" text-anchor="middle" font-family="Liberation Sans" font-size="10" fill="#111">0</text>
<text transform="translate(862.7,390) scale(0.78,1)" text-anchor="middle" font-family="Liberation Sans" font-size="10" fill="#111">0</text>
<text transform="translate(873.4,390) scale(0.78,1)" text-anchor="middle" font-family="Liberation Sans" font-size="10" fill="#111">0</text>
<text transform="translate(884.2,390) scale(0.78,1)" text-anchor="middle" font-family="Liberation Sans" font-size="10" fill="#111">0</text>
</svg>
<div class="a" style="left:489px;top:428px;width:14px;height:13px;background:#f7922e"></div>
<span class="t" style="left:508.7px;top:431.94px;font-size:9.05px;color:#111;">Unconfirmed Contacts</span>
<div class="a" style="left:609px;top:428px;width:14px;height:13px;background:#fbbd2d"></div>
<span class="t" style="left:628.8px;top:431.94px;font-size:9.05px;color:#111;">Confirmed Contacts</span>
<div class="a" style="left:729.3px;top:428px;width:14px;height:13px;background:#8db62a"></div>
<span class="t" style="left:748.9px;top:431.94px;font-size:9.05px;color:#111;">Unsubscribes</span>
<div class="a" style="left:489px;top:447px;width:14px;height:13px;background:#5e7bb5"></div>
<span class="t" style="left:508.6px;top:449.94px;font-size:9.05px;color:#111;">Bounces</span>
<div class="a" style="left:609px;top:447px;width:14px;height:13px;background:#e9502a"></div>
<span class="t" style="left:628.6px;top:449.94px;font-size:9.05px;color:#111;">Forwards</span>
<div class="panel" style="left:419px;top:483px;width:495px;height:157px"><div class="pin" style="left:5px"></div></div>
<span class="t" style="left:436.9px;top:498.17px;font-size:11.97px;color:#202020;">Recently Created Contact Lists</span>
<div class="dot" style="left:438px;top:521px;width:462px"></div>
<div class="dot" style="left:438px;top:552px;width:462px"></div>
<svg class="a" style="left:438.5px;top:526px" width="27" height="24" viewBox="0 0 27 24">
<path d="M10.3 2.6 A4.2 4.2 0 1 0 10.5 7.6" fill="none" stroke="#ababab" stroke-width="1.4"/>
<path d="M7 3.6 L9.6 5.2" stroke="#bdbdbd" stroke-width="0.9"/>
<path d="M1.2 23.5 L1.2 13.2 Q1.2 10.6 3.8 10.6 L11.5 10.6" fill="none" stroke="#ababab" stroke-width="1.4"/>
<path d="M4.6 14.5 L4.6 23.5" stroke="#c4c4c4" stroke-width="1.1"/>
<path d="M2 11.5 L11 11.5 L8.5 20 L2 20 Z" fill="#f4f4f4" opacity="0.6"/>
<path d="M8 17.2 L21.2 3.4 Q23 1.8 24.8 3.4 L25.6 4.2 Q27 5.8 25.5 7.4 L12.2 21.2 Z" fill="#acd433"/>
<path d="M8 17.2 L12.2 21.2 L7.6 22.2 Z" fill="#d8e8a0"/>
<path d="M7.6 22.2 L8.4 20.3 L9.6 21.5 Z" fill="#555"/>
</svg>
<svg class="a" style="left:438.5px;top:557px" width="27" height="24" viewBox="0 0 27 24">
<path d="M10.3 2.6 A4.2 4.2 0 1 0 10.5 7.6" fill="none" stroke="#ababab" stroke-width="1.4"/>
<path d="M7 3.6 L9.6 5.2" stroke="#bdbdbd" stroke-width="0.9"/>
<path d="M1.2 23.5 L1.2 13.2 Q1.2 10.6 3.8 10.6 L11.5 10.6" fill="none" stroke="#ababab" stroke-width="1.4"/>
<path d="M4.6 14.5 L4.6 23.5" stroke="#c4c4c4" stroke-width="1.1"/>
<path d="M2 11.5 L11 11.5 L8.5 20 L2 20 Z" fill="#f4f4f4" opacity="0.6"/>
<path d="M8 17.2 L21.2 3.4 Q23 1.8 24.8 3.4 L25.6 4.2 Q27 5.8 25.5 7.4 L12.2 21.2 Z" fill="#acd433"/>
<path d="M8 17.2 L12.2 21.2 L7.6 22.2 Z" fill="#d8e8a0"/>
<path d="M7.6 22.2 L8.4 20.3 L9.6 21.5 Z" fill="#555"/>
</svg>
<span class="t" style="left:467.6px;top:534.93px;font-size:8.82px;color:#2b5d82;">Exhibition List<span style="color:#111;font-size:9.4px"> - (0 Contacts)</span></span>
<span class="t" style="left:467.6px;top:565.18px;font-size:9.0px;color:#2b5d82;">Newsletter Subscribers<span style="color:#111;font-size:9.4px"> - (0 Contacts)</span></span>
<div class="btn" style="left:750.5px;top:600.5px;width:150px;height:25.5px"></div>
<span class="t" style="left:774.9px;top:609.75px;font-size:9.15px;color:#3b5872;">See All Contact Lists</span>
<svg class="a" style="left:875px;top:605.3px" width="16" height="16" viewBox="0 0 16 16"><circle cx="8" cy="8" r="7" fill="#eeaa18" stroke="#dc9410" stroke-width="0.8"/><path d="M4 8 L11 8 M8 4.8 L11.3 8 L8 11.2" fill="none" stroke="#fff8cc" stroke-width="2.4" stroke-linejoin="miter"/></svg>
</body></html>
